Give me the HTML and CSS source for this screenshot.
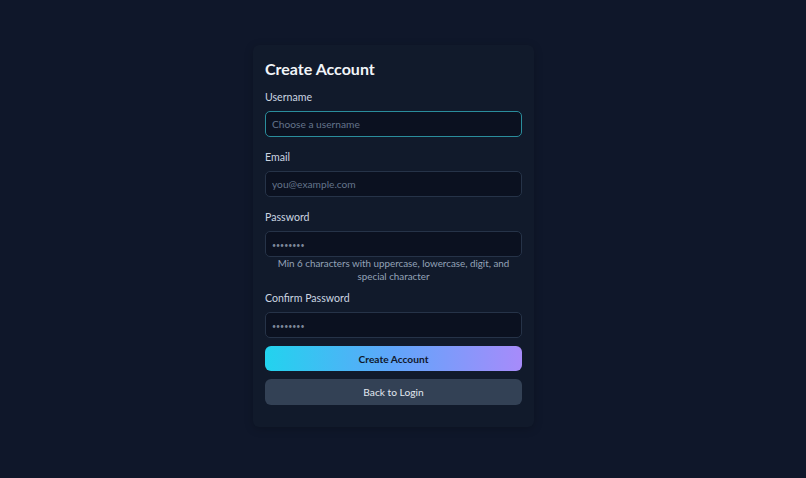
FILE: index.html
```html
<!DOCTYPE html>
<html lang="en">
<head>
<meta charset="utf-8">
<title>Create Account</title>
<link rel="stylesheet" href="styles.css">
</head>
<body>
<div class="page">
  <form class="card">
    <h1 class="title">Create Account</h1>
    <div class="field">
      <label class="label" for="u">Username</label>
      <input class="input focused" id="u" type="text" placeholder="Choose a username">
    </div>
    <div class="field">
      <label class="label" for="e">Email</label>
      <input class="input" id="e" type="email" placeholder="you@example.com">
    </div>
    <div class="field">
      <label class="label" for="p">Password</label>
      <input class="input pw" id="p" type="password" placeholder="••••••••">
      <p class="hint">Min 6 characters with uppercase, lowercase, digit, and special character</p>
    </div>
    <div class="field">
      <label class="label" for="c">Confirm Password</label>
      <input class="input pw" id="c" type="password" placeholder="••••••••">
    </div>
    <button type="button" class="btn primary">Create Account</button>
    <button type="button" class="btn secondary">Back to Login</button>
  </form>
</div>
</body>
</html>
```
FILE: styles.css
```css
* { box-sizing: border-box; }
html, body { margin: 0; padding: 0; }
body {
  background: #0f172a;
  font-family: "Lato", "Noto Sans", "Liberation Sans", sans-serif;
  color: #cbd5e1;
  width: 806px;
  height: 478px;
  overflow: hidden;
}
.page {
  padding-top: 45px;
  padding-left: 253px;
}
.card {
  width: 281px;
  background: #111a2b;
  border-radius: 6px;
  padding: 14px 12px 22px 12px;
  display: flex;
  flex-direction: column;
  box-shadow: 0 2px 10px rgba(0,0,0,0.2);
}
.title {
  margin: 0 0 10px 0;
  font-size: 16px;
  line-height: 20px;
  font-weight: 700;
  color: #f1f5f9;
}
.field {
  display: flex;
  flex-direction: column;
  margin-bottom: 12px;
}
.field:nth-child(4) { margin-bottom: 7px; }
.field:nth-child(5) { margin-bottom: 8px; }
.label {
  font-size: 10.6px;
  line-height: 16px;
  color: #cbd5e1;
  margin-bottom: 6px;
}
.input {
  height: 26px;
  width: 100%;
  background: #0b1120;
  border: 1px solid #263348;
  border-radius: 5px;
  padding: 0 6px;
  font-family: inherit;
  font-size: 10.2px;
  color: #e2e8f0;
  outline: none;
}
.input::placeholder { color: #64748b; }
.input.focused { border-color: #2a8d9c; }
.input.pw::placeholder { font-size: 7px; color: #7c8798; }
.hint {
  margin: 0;
  padding: 0 4px;
  text-align: center;
  font-size: 9.8px;
  line-height: 13px;
  color: #94a3b8;
}
.btn {
  width: 100%;
  border: none;
  border-radius: 6px;
  font-family: inherit;
  font-size: 10.2px;
  cursor: pointer;
}
.primary {
  height: 25px;
  background: linear-gradient(90deg, #22d3ee 0%, #60a5fa 50%, #a78bfa 100%);
  color: #0f172a;
  font-weight: 700;
  margin-bottom: 8px;
}
.secondary {
  height: 26px;
  background: #334155;
  color: #e2e8f0;
}
```
